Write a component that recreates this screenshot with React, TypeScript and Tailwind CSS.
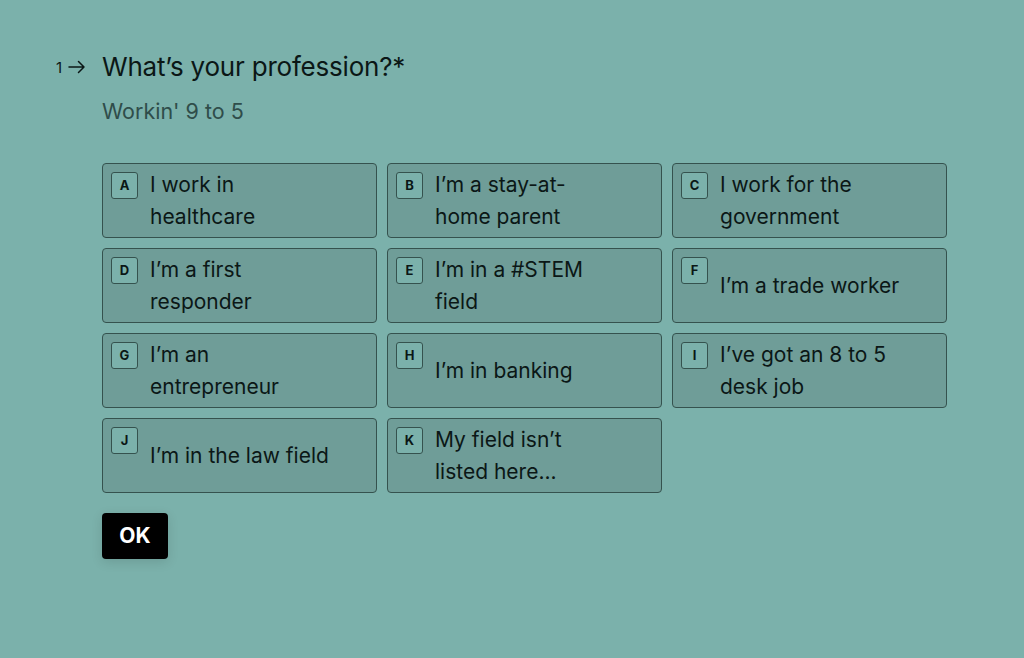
import React from "react";

const options: { key: string; label: string }[] = [
  { key: "A", label: "I work in healthcare" },
  { key: "B", label: "I’m a stay-at-home parent" },
  { key: "C", label: "I work for the government" },
  { key: "D", label: "I’m a first responder" },
  { key: "E", label: "I’m in a #STEM field" },
  { key: "F", label: "I’m a trade worker" },
  { key: "G", label: "I’m an entrepreneur" },
  { key: "H", label: "I’m in banking" },
  { key: "I", label: "I’ve got an 8 to 5 desk job" },
  { key: "J", label: "I’m in the law field" },
  { key: "K", label: "My field isn’t listed here..." },
];

export default function App() {
  return (
    <div className="min-h-screen w-full bg-[#7bb1ab] font-['Inter','Liberation_Sans',sans-serif] text-[#0b1716]">
      <div className="flex pl-[56px] pt-[50px]">
        <div className="flex h-[34px] w-[46px] items-center gap-[5px] text-[#0b1716]">
          <span className="text-[15px] leading-none">1</span>
          <svg width="20" height="16" viewBox="0 0 20 16" fill="none" stroke="currentColor" strokeWidth="1.5" strokeLinecap="round" strokeLinejoin="round">
            <path d="M2 8h15M11.5 2.5L17 8l-5.5 5.5" />
          </svg>
        </div>
        <div>
          <h1 className="text-[26px] leading-[34px] tracking-[-0.2px]">What’s your profession?*</h1>
          <p className="mt-[12px] text-[21.5px] leading-[30px] text-[#2f4d4a]">Workin' 9 to 5</p>
          <div className="mt-[37px] grid grid-cols-[275px_275px_275px] gap-x-[10px] gap-y-[10px]">
            {options.map((o) => (
              <div
                key={o.key}
                className="flex h-[75px] items-start rounded-[4px] border border-[#35524e] bg-[#6f9d98] pl-[8px] pr-[8px]"
              >
                <div className="mt-[8px] flex h-[27px] w-[27px] shrink-0 items-center justify-center rounded-[3px] border border-[#35524e] bg-[#7bb1ab] text-[13px] font-bold leading-none text-[#0b1716]">
                  {o.key}
                </div>
                <div className="ml-[12px] flex h-full items-center">
                  <span className="block w-[182px] text-[21px] leading-[32px]">{o.label}</span>
                </div>
              </div>
            ))}
          </div>
          <button className="mt-[20px] h-[46px] w-[66px] rounded-[4px] bg-black text-[21px] font-bold text-white shadow-[0_3px_12px_rgba(0,0,0,0.12)]">
            OK
          </button>
        </div>
      </div>
    </div>
  );
}
